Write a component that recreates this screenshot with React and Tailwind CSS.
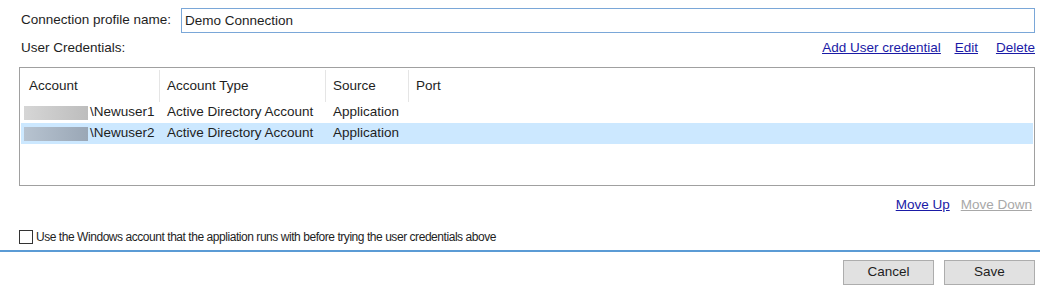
import React, { useState } from 'react';

const rows = [
  { user: 'Newuser1', type: 'Active Directory Account', source: 'Application' },
  { user: 'Newuser2', type: 'Active Directory Account', source: 'Application', selected: true },
];

export default function App() {
  const [name, setName] = useState('Demo Connection');
  const [useWindows, setUseWindows] = useState(false);

  return (
    <div className="w-[1040px] h-[292px] bg-white text-[13.5px] text-[#1e1e1e] overflow-hidden" style={{ fontFamily: '"Liberation Sans", Arial, sans-serif' }}>
      <div className="pl-[19px] pr-[5px]">
        {/* Nombre del perfil */}
        <div className="flex items-center pt-[8px] h-[33px]">
          <span className="w-[162px] pl-[2px]">Connection profile name:</span>
          <input
            value={name}
            onChange={(e) => setName(e.target.value)}
            className="flex-1 h-[25px] border border-[#7aa7d8] px-[3px] outline-none text-[13.5px]"
          />
        </div>

        {/* Credenciales */}
        <div className="flex items-center justify-between h-[30px]">
          <span className="pl-[2px]">User Credentials:</span>
          <div className="flex gap-[14px] text-[#1a1aa6] underline">
            <a href="#">Add User credential</a>
            <a href="#">Edit</a>
            <a href="#" className="ml-[4px]">Delete</a>
          </div>
        </div>

        <div className="mt-[4px] h-[119px] border border-[#a0a0a0] pt-[2px] px-[1px]">
          <div className="flex h-[32px] items-center">
            <div className="w-[139px] h-full flex items-center pl-[8px] border-r border-[#e5e5e5]">Account</div>
            <div className="w-[166px] h-full flex items-center pl-[7px] border-r border-[#e5e5e5]">Account Type</div>
            <div className="w-[83px] h-full flex items-center pl-[7px] border-r border-[#e5e5e5]">Source</div>
            <div className="h-full flex items-center pl-[7px]">Port</div>
          </div>
          {rows.map((r) => (
            <div key={r.user} className={`flex h-[21px] items-center ${r.selected ? 'bg-[#cce8ff]' : ''}`}>
              <div className="w-[146px] flex items-center pl-[3px]">
                <span className={`w-[64px] h-[14px] ${r.selected ? 'bg-gradient-to-r from-[#b7c3d0] to-[#9aa7b6]' : 'bg-gradient-to-r from-[#d6d6d6] to-[#bdbdbd]'}`} />
                <span className="ml-[2px]">\{r.user}</span>
              </div>
              <div className="w-[166px]">{r.type}</div>
              <div className="w-[83px]">{r.source}</div>
            </div>
          ))}
        </div>

        <div className="flex justify-end gap-[11px] h-[38px] items-center mr-[3px]">
          <a href="#" className="text-[#1a1aa6] underline">Move Up</a>
          <span className="text-[#a8a8a8] underline">Move Down</span>
        </div>

        <label className="flex items-center h-[24px] mt-[1px] text-[12px] tracking-[-0.45px]">
          <input
            type="checkbox"
            checked={useWindows}
            onChange={(e) => setUseWindows(e.target.checked)}
            className="appearance-none w-[14px] h-[14px] border border-[#333] bg-white mr-[3px] shrink-0"
          />
          Use the Windows account that the appliation runs with before trying the user credentials above
        </label>
      </div>

      <div className="h-[2px] bg-[#5b9bd5] mt-[1px]" />

      <div className="flex justify-end gap-[10px] pr-[5px] pt-[8px]">
        <button className="w-[91px] h-[25px] bg-[#e1e1e1] border border-[#adadad]">Cancel</button>
        <button className="w-[91px] h-[25px] bg-[#e1e1e1] border border-[#adadad]">Save</button>
      </div>
    </div>
  );
}
